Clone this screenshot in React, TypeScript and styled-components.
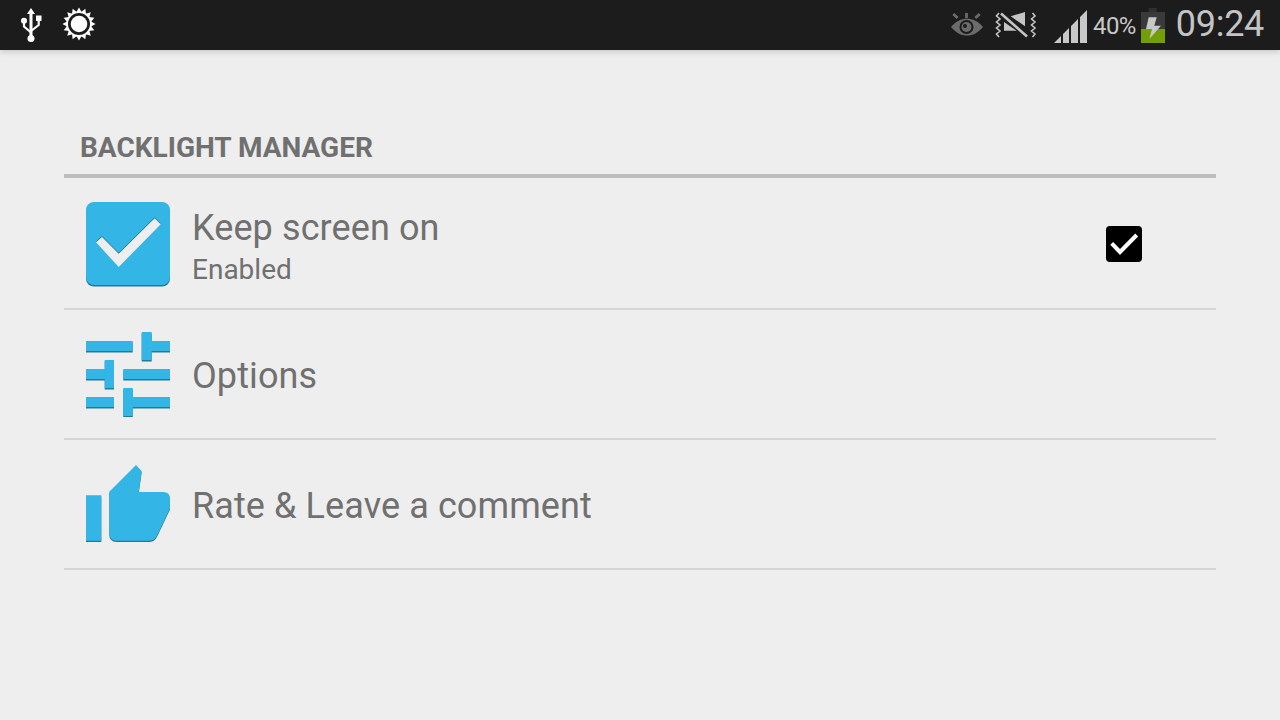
import styled, { createGlobalStyle } from "styled-components";

const GlobalStyle = createGlobalStyle`
  html, body {
    margin: 0;
    padding: 0;
    height: 100%;
    background: #eeeeee;
    font-family: Roboto, "Liberation Sans", sans-serif;
  }
`;

const UsbIcon = () => (
  <svg width="22" height="36" viewBox="0 0 22 36">
    <path d="M11 0l4 6h-2.500v24h-3V6H7z" fill="#fff" />
    <circle cx="11" cy="30.500" r="3.500" fill="#fff" />
    <circle cx="4" cy="12.700" r="3" fill="#fff" />
    <rect x="16" y="7.500" width="5.500" height="5.500" fill="#fff" />
    <path d="M4 14v4.500l7 6M18.700 12v5l-7.700 6" fill="none" stroke="#fff" strokeWidth="2.200" />
  </svg>
);

const sunTeeth = Array.from({ length: 16 }, (_, i) => i * 22.5);

const SunIcon = () => (
  <svg width="34" height="34" viewBox="-17 -17 34 34">
    {sunTeeth.map((deg) => (
      <path key={deg} d="M-2.600-12L0-16.600L2.600-12z" fill="#fff" transform={`rotate(${deg})`} />
    ))}
    <circle r="11.800" fill="none" stroke="#fff" strokeWidth="1.600" />
    <circle r="8.300" fill="#fff" />
  </svg>
);

const EyeIcon = () => (
  <svg width="32" height="24" viewBox="0 0 32 24">
    <path d="M0 14C5 8 10 5.700 16 5.700S27 8 32 14C27 20 22 22.500 16 22.500S5 20 0 14z" fill="#6b6b6b" />
    <circle cx="15.500" cy="14" r="7" fill="#1c1c1c" />
    <circle cx="15.500" cy="14" r="5" fill="#6b6b6b" />
    <circle cx="14" cy="13" r="2" fill="#1c1c1c" />
    <path d="M2.300 1l4.400 4M15.500 0v5M28.700 1l-4.400 4" stroke="#6b6b6b" strokeWidth="2.800" fill="none" />
  </svg>
);

const VibrateOffIcon = () => (
  <svg width="42" height="26" viewBox="0 0 42 26">
    <path d="M15.700 4.300L30 0V14.300z M9 10L21.700 18.700H9z" fill="#c4c4c4" />
    <path d="M6 1.500L32 24.500" fill="none" stroke="#c4c4c4" strokeWidth="2.600" />
    <path d="M4 1l-2.500 3 3.500 3-3.500 3 3.500 3-3.500 3 3.500 3-3.500 3 2.500 3M37.500 1l2.500 3-3.500 3 3.500 3-3.500 3 3.500 3-3.500 3 3.500 3-2.500 3" fill="none" stroke="#c4c4c4" strokeWidth="1.600" />
  </svg>
);

const SignalIcon = () => (
  <svg width="33" height="33" viewBox="0 0 33 33">
    <path d="M0 33l7-7v7z M9 33V24l6-6v15z M17 33V16l7-7v24z M26 33V7l7-7v33z" fill="#c8c8c8" />
  </svg>
);

const BatteryIcon = () => (
  <svg width="24" height="35" viewBox="0 0 24 35">
    <rect x="7.700" y="0" width="8" height="4.300" fill="#303030" />
    <rect x="0" y="4" width="24" height="17" fill="#3a3a3a" />
    <rect x="0" y="21" width="24" height="14" fill="#739f06" />
    <path d="M7.700 9.300H15.700L13.300 17.700H20L8.300 31L11 21H5z" fill="#c8c8c8" />
  </svg>
);

const CheckTile = () => (
  <RowIcon viewBox="0 0 84 85">
    <rect y="1.500" width="84" height="83" rx="8" fill="#1f7a9c" />
    <rect width="84" height="83" rx="8" fill="#33b5e5" />
    <path d="M10 39.300L16 34L32.700 50.700L68.700 15.300L74.700 21.300L32.700 64z" fill="#1f7a9c" />
    <path d="M10 40.300L16 35L32.700 51.700L68.700 16.300L74.700 22.300L32.700 65z" fill="#eeeeee" />
  </RowIcon>
);

const sliderBars = "M0 9h46.700v10H0z M55.700 0h10v9H84v10H65.700v9h-10z M0 37h18.700v-9H28v28h-9.300V47H0z M37.300 37H84v10H37.300z M0 65h28v10H0z M37.300 56h9.400v9H84v10H46.700v9h-9.400z";

const SlidersGlyph = () => (
  <RowIcon viewBox="0 0 84 85">
    <path d={sliderBars} fill="#1f7a9c" transform="translate(0 1.500)" />
    <path d={sliderBars} fill="#33b5e5" />
  </RowIcon>
);

const thumbShape =
  "M0 33.300h15.300v45.400H0z M50 3L55.700 9L52.700 30H77.300Q84 30 84 37V46.300L71.300 73Q68.500 78.700 64 78.700H30.700Q23.300 78.700 23.300 71.300V29.700z";

const ThumbGlyph = () => (
  <RowIcon viewBox="0 0 84 85">
    <path d={thumbShape} fill="#1f7a9c" transform="translate(0 1.200)" />
    <path d={thumbShape} fill="#33b5e5" />
  </RowIcon>
);

const App = () => {
  return (
    <>
      <GlobalStyle />
      <Page>
        <StatusBar>
          <StatusGroup>
            <UsbSlot>
              <UsbIcon />
            </UsbSlot>
            <SunSlot>
              <SunIcon />
            </SunSlot>
          </StatusGroup>
          <StatusGroup>
            <EyeSlot>
              <EyeIcon />
            </EyeSlot>
            <VibrateSlot>
              <VibrateOffIcon />
            </VibrateSlot>
            <SignalSlot>
              <SignalIcon />
            </SignalSlot>
            <Percent>40%</Percent>
            <BatterySlot>
              <BatteryIcon />
            </BatterySlot>
            <Clock>09:24</Clock>
          </StatusGroup>
        </StatusBar>
        <Content>
          <SectionTitle>BACKLIGHT MANAGER</SectionTitle>
          <Row>
            <CheckTile />
            <RowText>
              <RowTitle>Keep screen on</RowTitle>
              <RowSummary>Enabled</RowSummary>
            </RowText>
            <CheckBox>
              <svg width="36" height="36" viewBox="0 0 36 36">
                <path d="M5.700 17.300L14 26L30.700 9" fill="none" stroke="#fff" strokeWidth="4" />
              </svg>
            </CheckBox>
          </Row>
          <Row>
            <SlidersGlyph />
            <RowText>
              <RowTitle>Options</RowTitle>
            </RowText>
          </Row>
          <Row>
            <ThumbGlyph />
            <RowText>
              <RowTitle>Rate &amp; Leave a comment</RowTitle>
            </RowText>
          </Row>
        </Content>
      </Page>
    </>
  );
};

const Page = styled.div`
  width: 1280px;
  height: 720px;
  overflow: hidden;
  background: #eeeeee;
`;

const StatusBar = styled.header`
  height: 50px;
  display: flex;
  align-items: flex-start;
  justify-content: space-between;
  background: #1c1c1c;
  box-shadow: 0 2px 6px rgba(0, 0, 0, 0.16);
`;

const StatusGroup = styled.div`
  display: flex;
  align-items: flex-start;
`;

const UsbSlot = styled.div`
  display: flex;
  margin: 8px 0 0 20px;
`;

const SunSlot = styled.div`
  display: flex;
  margin: 7px 0 0 20px;
`;

const EyeSlot = styled.div`
  display: flex;
  margin: 13px 0 0 0;
`;

const VibrateSlot = styled.div`
  display: flex;
  margin: 12px 0 0 12px;
`;

const SignalSlot = styled.div`
  display: flex;
  margin: 10px 0 0 17px;
`;

const Percent = styled.span`
  margin: 11px 0 0 6px;
  font-size: 24px;
  line-height: 30px;
  letter-spacing: -0.6px;
  color: #c8c8c8;
`;

const BatterySlot = styled.div`
  display: flex;
  margin: 8px 0 0 5px;
`;

const Clock = styled.span`
  margin: 3px 16px 0 11px;
  font-size: 36px;
  font-weight: 400;
  line-height: 42px;
  letter-spacing: -0.3px;
  color: #c4c4c4;
`;

const Content = styled.main`
  margin: 76px 64px 0;
`;

const SectionTitle = styled.h2`
  margin: 0 0 2px;
  padding: 0 16px;
  height: 52px;
  box-sizing: border-box;
  border-bottom: 4px solid #bdbdbd;
  font-size: 28px;
  font-weight: 700;
  line-height: 44px;
  color: #707070;
`;

const Row = styled.div`
  height: 130px;
  box-sizing: border-box;
  display: flex;
  align-items: center;
  padding: 0 74px 0 22px;
  border-bottom: 2px solid #d6d6d6;
`;

const RowIcon = styled.svg`
  width: 84px;
  height: 85px;
  flex: none;
`;

const RowText = styled.div`
  flex: 1;
  margin-left: 22px;
  padding-top: 4px;
`;

const RowTitle = styled.div`
  font-size: 36px;
  line-height: 48px;
  letter-spacing: 0.1px;
  color: #707070;
`;

const RowSummary = styled.div`
  font-size: 28px;
  line-height: 36px;
  color: #707070;
`;

const CheckBox = styled.div`
  width: 36px;
  height: 36px;
  display: flex;
  border-radius: 4px;
  background: #000000;
`;

export default App;
